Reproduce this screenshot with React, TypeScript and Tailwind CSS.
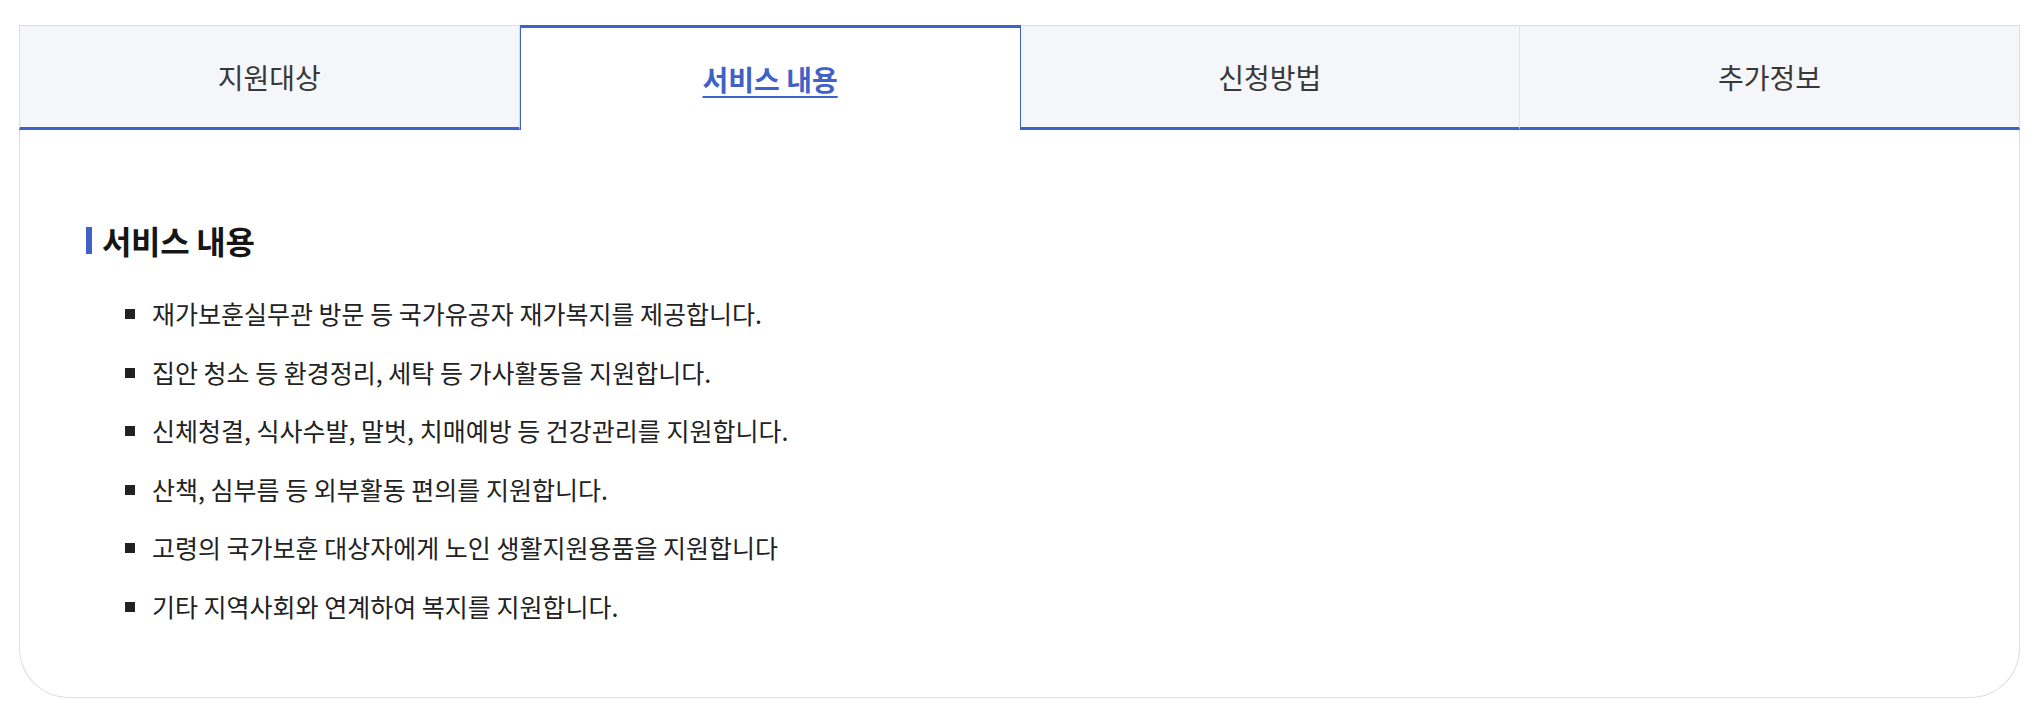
const tabs = ["지원대상", "서비스 내용", "신청방법", "추가정보"];
const active = 1;

const items = [
  "재가보훈실무관 방문 등 국가유공자 재가복지를 제공합니다.",
  "집안 청소 등 환경정리, 세탁 등 가사활동을 지원합니다.",
  "신체청결, 식사수발, 말벗, 치매예방 등 건강관리를 지원합니다.",
  "산책, 심부름 등 외부활동 편의를 지원합니다.",
  "고령의 국가보훈 대상자에게 노인 생활지원용품을 지원합니다",
  "기타 지역사회와 연계하여 복지를 지원합니다.",
];

export default function App() {
  return (
    <div
      className="min-h-[714px] bg-white pt-[25px]"
      style={{ fontFamily: '"Noto Sans CJK KR", "Noto Sans", sans-serif' }}
    >
      <div className="ml-[19px] w-[2001px]">
        {/* tabs */}
        <div className="flex">
          {tabs.map((t, i) =>
            i === active ? (
              <div
                key={t}
                className="flex h-[105px] flex-1 items-center justify-center border-x border-t-[3px] border-[#4062c8] bg-white"
              >
                <span className="text-[28px] font-bold text-[#4062c8] underline decoration-2 underline-offset-[5px]">
                  {t}
                </span>
              </div>
            ) : (
              <div
                key={t}
                className={
                  "flex h-[105px] flex-1 items-center justify-center border-t border-b-[3px] border-t-[#dddddd] border-b-[#4062c8] bg-[#f4f6fa] " +
                  (i === 0 ? "border-l border-l-[#dddddd] " : "") +
                  (i === tabs.length - 1 || i === active - 1 ? "border-r border-r-[#dddddd]" : "") +
                  (i > active && i < tabs.length - 1 ? "border-r border-r-[#e2e4ea]" : "")
                }
              >
                <span className="text-[28px] text-[#383838]">{t}</span>
              </div>
            )
          )}
        </div>

        {/* panel */}
        <div className="rounded-b-[50px] border-x border-b border-[#dddddd] pb-[72px] pl-[66px] pt-[90px]">
          <h3 className="flex h-[40px] items-center gap-[10px] text-[32px] font-bold tracking-[-0.01em] text-[#151515]">
            <span className="h-[27px] w-[6px] bg-[#4062c8]" />
            서비스 내용
          </h3>

          <ul className="mt-[36px] flex flex-col gap-[22.5px] pl-[39px]">
            {items.map((it) => (
              <li key={it} className="flex h-[36px] items-center gap-[17px]">
                <span className="h-[10px] w-[10px] shrink-0 bg-[#222222]" />
                <span className="text-[25px] text-[#222222]">{it}</span>
              </li>
            ))}
          </ul>
        </div>
      </div>
    </div>
  );
}
